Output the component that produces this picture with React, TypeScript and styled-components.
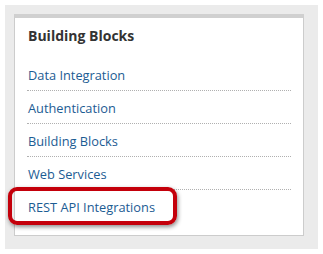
import React from 'react'
import styled, { createGlobalStyle } from 'styled-components'

const Global = createGlobalStyle`
  html, body {
    margin: 0;
    padding: 0;
    background: #ffffff;
  }
`

const links = ['Data Integration', 'Authentication', 'Building Blocks', 'Web Services', 'REST API Integrations']

const App = () => {
  return (
    <>
      <Global />
      <Page>
        <Well>
          <Panel>
            <Title>Building Blocks</Title>
            <List>
              {links.map((l, i) => (
                <Row key={l} last={i === links.length - 1}>
                  <Link>{l}</Link>
                  {i === links.length - 1 && <Highlight />}
                </Row>
              ))}
            </List>
          </Panel>
        </Well>
      </Page>
    </>
  )
}

export default App

const Page = styled.div`
  width: 323px;
  height: 254px;
  padding: 5px;
  box-sizing: border-box;
`

const Well = styled.div`
  width: 313px;
  height: 244px;
  background: #ebebeb;
  padding: 9px 0 0 9px;
  box-sizing: border-box;
`

const Panel = styled.div`
  width: 290px;
  height: 222px;
  box-sizing: border-box;
  background: #ffffff;
  border: 1px solid #cccccc;
  border-top: 4px solid #d0d0d0;
  padding: 0 12px 0 12px;
  font-family: "Open Sans", "Liberation Sans", sans-serif;
`

const Title = styled.div`
  font-size: 14px;
  font-weight: 700;
  color: #333333;
  height: 40px;
  line-height: 22px;
  padding-top: 7px;
  box-sizing: border-box;
  margin-left: 1px;
`

const List = styled.div`
  display: flex;
  flex-direction: column;
`

const Row = styled.div<{ last?: boolean }>`
  position: relative;
  height: 33px;
  box-sizing: border-box;
  display: flex;
  align-items: center;
  border-bottom: ${({ last }) => (last ? 'none' : '1px dotted #b0b0b0')};
`

const Link = styled.span`
  font-size: 12.8px;
  color: #1c5c93;
  margin-left: 1px;
  margin-top: 1px;
`

const Highlight = styled.div`
  position: absolute;
  left: -19px;
  top: -3px;
  width: 169px;
  height: 38px;
  box-sizing: border-box;
  border: 4px solid #c4000b;
  border-radius: 9px;
  box-shadow: 1px 2px 4px rgba(0, 0, 0, 0.45);
`
